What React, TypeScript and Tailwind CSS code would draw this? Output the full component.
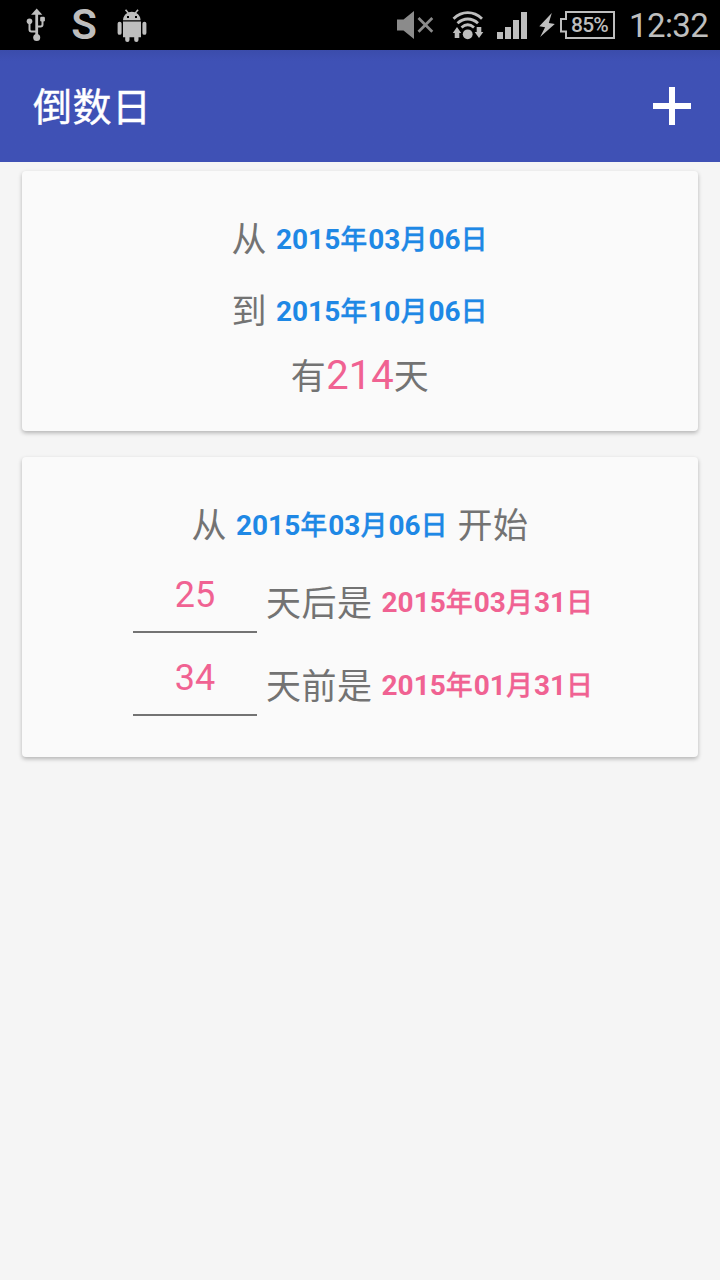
import React from "react";

const CJK = "font-['Roboto','Noto_Sans_CJK_SC',sans-serif]";

function DateText({ value, tone }: { value: string; tone: "blue" | "pink" }) {
  const parts = value.split(/([年月日])/).filter(Boolean);
  return (
    <span
      className={
        "flex h-9 items-baseline whitespace-pre text-[28px] leading-[38px] " +
        (tone === "blue" ? "text-[#1e88e5]" : "text-[#f06292]")
      }
    >
      {parts.map((p, i) => (
        <span
          key={i}
          className={/\d/.test(p) ? "font-bold" : "w-7 text-[27px] font-medium [-webkit-text-stroke:0.3px_currentColor]"}
        >
          {p}
        </span>
      ))}
    </span>
  );
}

function Label({ children }: { children: React.ReactNode }) {
  return (
    <span className="pt-[4px] text-[35px] leading-[48px] tracking-[0.5px] text-[#737373]">{children}</span>
  );
}

function DayRow({ days, label, date }: { days: string; label: string; date: string }) {
  return (
    <div className="flex h-[83px] items-start pl-[111px]">
      <div className="h-[60px] w-[124px] border-b-2 border-[#737373] text-center text-[36px] leading-[44px] text-[#f06292]">
        {days}
      </div>
      <div className="ml-[9px] mt-[4px] flex items-start gap-[9px]">
        <Label>{label}</Label>
        <div className="pt-[7px]">
          <DateText value={date} tone="pink" />
        </div>
      </div>
    </div>
  );
}

function StatusBar() {
  return (
    <div className="flex h-[50px] items-center bg-black text-[#bebebe]">
      <svg className="ml-[26px] h-[50px] w-5" viewBox="26 0 20 50" fill="none" stroke="currentColor" strokeWidth="2">
        <path d="M36.7 12v26" strokeWidth="2.8" />
        <path d="M36.7 8.5l5.6 6.200H31.100z" fill="currentColor" stroke="none" />
        <path d="M29.500 21v8.500q0 2 2 2h5.200M42.500 19v5.500q0 2-2 2h-3.700" />
        <circle cx="29.500" cy="21.300" r="2.800" fill="currentColor" stroke="none" />
        <rect x="40.200" y="16.800" width="4.700" height="4.700" rx="1.300" fill="currentColor" stroke="none" />
        <circle cx="36.700" cy="37.500" r="3.500" fill="currentColor" stroke="none" />
      </svg>
      <span className="ml-[24px] w-[27px] text-center text-[42px] font-semibold leading-[52px] tracking-[-1px]">S</span>
      <svg className="ml-[19px] h-[50px] w-8" viewBox="116 0 32 50" fill="currentColor">
        <path d="M123 20.200q.3-5 4.300-7.200l-2.400-2.700 1.300-1 2.400 2.900q3.300-1.100 6.400 0l2.400-2.900 1.300 1-2.400 2.700q4 2.200 4.300 7.200zM127 16v2h2v-2zM135 16v2h2v-2z" fillRule="evenodd" />
        <path d="M123 21.500h18v15.700h-2.500v2.700a2 2 0 0 1-4.300 0v-2.700h-4.700v2.700a2 2 0 0 1-4.300 0v-2.700H123z" />
        <rect x="117.600" y="21.800" width="4" height="13" rx="1.900" />
        <rect x="142.400" y="21.800" width="4" height="13" rx="1.900" />
      </svg>
      <svg className="ml-[247px] h-[50px] w-[40px]" viewBox="395 0 40 50" fill="#8b8b8b">
        <path d="M397 19.500h6.500L414 11v28l-10.500-8.500H397z" />
        <path d="M418.500 18l13.800 13.800M432.300 18l-13.800 13.800" stroke="#8b8b8b" strokeWidth="2.700" />
      </svg>
      <svg className="ml-4 h-[50px] w-[34px]" viewBox="451 0 34 50" fill="none" stroke="currentColor" strokeWidth="2.800">
        <path d="M453.500 18.700c8.500-8 20-8 28.500 0M457.500 23.300c6.200-5.700 14.300-5.700 20.500 0M461.500 27.500c4-3.500 8.500-3.500 12.500 0" />
        <circle cx="467.700" cy="34.300" r="4.900" fill="currentColor" stroke="none" />
        <path d="M457 27l4.200 6h-1.900v5h-4.600v-5h-1.900zM479 38l-4.300-6h2v-5h4.600v5h2z" fill="currentColor" stroke="none" />
      </svg>
      <svg className="ml-3 h-[50px] w-[30px]" viewBox="497 0 30 50" fill="currentColor">
        <path d="M497 32h6v7h-6zM505 27h6v12h-6zM513 20h6v19h-6zM521 12h6v27h-6z" />
      </svg>
      <svg className="ml-3 h-[50px] w-4" viewBox="539 0 16 50" fill="currentColor">
        <path d="M551.800 13L539.300 26.300l5.800 1-5 9.700L554.800 24l-6-1z" />
      </svg>
      <div className="ml-[5px] grid h-[50px] w-[56px] place-items-center">
        <svg className="col-start-1 row-start-1 h-[50px] w-[56px]" viewBox="560 0 56 50" fill="none" stroke="currentColor" strokeWidth="2">
          <path d="M566 12h48v26h-48v-6.500h-5V19h5z" />
        </svg>
        <span className="col-start-1 row-start-1 pl-[3px] text-[21px] font-medium leading-[50px] tracking-[-0.8px]">85%</span>
      </div>
      <span className="ml-[13px] whitespace-nowrap pt-[2px] text-[33px] leading-[52px] tracking-[-0.6px]">12:32</span>
    </div>
  );
}

const cardShadow = "rounded-[4px] bg-[#fafafa] shadow-[0_2px_4px_rgba(0,0,0,0.27)]";

export default function App() {
  return (
    <div className={"flex h-[1280px] w-[720px] flex-col overflow-hidden bg-[#f5f5f5] " + CJK}>
      <StatusBar />
      <header className="flex h-[112px] items-center justify-between bg-[#3f51b5] bg-linear-to-b from-[#3b4cab] from-0% to-[#3f51b5] to-10% pl-[33px] pr-[28px] text-white">
        <h1 className="pt-[4px] text-[39px] font-normal leading-[56px] tracking-[0.5px] [-webkit-text-stroke:0.4px_white]">倒数日</h1>
        <svg className="h-10 w-10" viewBox="0 0 40 40" fill="#fff">
          <path d="M17 1h6v16h16v6H23v16h-6V23H1v-6h16z" />
        </svg>
      </header>
      <main className="flex flex-col gap-[26px] px-[22px] pt-[9px]">
        <section className={"flex h-[260px] flex-col pt-8 " + cardShadow}>
          <div className="flex h-[72px] items-center justify-center gap-[9px]">
            <Label>从</Label>
            <DateText value="2015年03月06日" tone="blue" />
          </div>
          <div className="flex h-[72px] items-center justify-center gap-[9px]">
            <Label>到</Label>
            <DateText value="2015年10月06日" tone="blue" />
          </div>
          <div className="flex h-[58px] items-center justify-center">
            <Label>有</Label>
            <span className="text-[40px] leading-[54px] text-[#f06292]">214</span>
            <Label>天</Label>
          </div>
        </section>
        <section className={"flex h-[300px] flex-col pt-8 " + cardShadow}>
          <div className="flex h-[72px] items-center justify-center gap-[9px]">
            <Label>从</Label>
            <DateText value="2015年03月06日" tone="blue" />
            <Label>开始</Label>
          </div>
          <div className="pt-[12px]">
            <DayRow days="25" label="天后是" date="2015年03月31日" />
            <DayRow days="34" label="天前是" date="2015年01月31日" />
          </div>
        </section>
      </main>
    </div>
  );
}
